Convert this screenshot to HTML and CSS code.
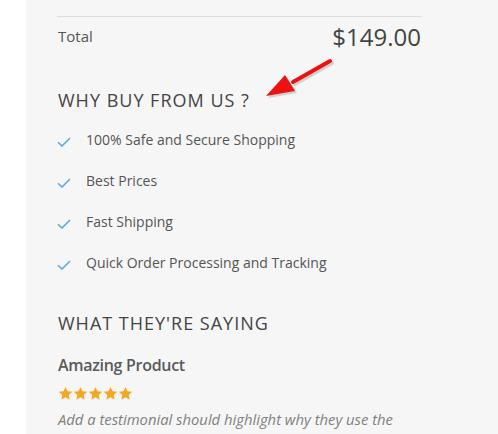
FILE: index.html
```html
<!DOCTYPE html>
<html>
<head>
<meta charset="utf-8">
<link rel="stylesheet" href="styles.css">
</head>
<body>
<div class="panel">
  <div class="summary">
    <div class="total-row">
      <span class="total-label">Total</span>
      <span class="total-price">$149.00</span>
    </div>
  </div>
  <h3 class="heading why">WHY BUY FROM US ?</h3>
  <ul class="checks">
    <li><svg class="check" viewBox="0 0 14 10" width="14" height="10"><path d="M1 5.2 L5 9 L13 1" fill="none" stroke="#5aa6dc" stroke-width="1.5"/></svg><span>100% Safe and Secure Shopping</span></li>
    <li><svg class="check" viewBox="0 0 14 10" width="14" height="10"><path d="M1 5.2 L5 9 L13 1" fill="none" stroke="#5aa6dc" stroke-width="1.5"/></svg><span>Best Prices</span></li>
    <li><svg class="check" viewBox="0 0 14 10" width="14" height="10"><path d="M1 5.2 L5 9 L13 1" fill="none" stroke="#5aa6dc" stroke-width="1.5"/></svg><span>Fast Shipping</span></li>
    <li><svg class="check" viewBox="0 0 14 10" width="14" height="10"><path d="M1 5.2 L5 9 L13 1" fill="none" stroke="#5aa6dc" stroke-width="1.5"/></svg><span>Quick Order Processing and Tracking</span></li>
  </ul>
  <h3 class="heading saying">WHAT THEY'RE SAYING</h3>
  <div class="testimonial">
    <div class="t-title">Amazing Product</div>
    <div class="stars">
      <svg viewBox="0 0 24 24" width="15" height="15"><path d="M12 1.5l3.2 7 7.6.8-5.7 5.1 1.6 7.5L12 18l-6.7 3.9 1.6-7.5L1.2 9.3l7.6-.8z" fill="#f5a623"/></svg><svg viewBox="0 0 24 24" width="15" height="15"><path d="M12 1.5l3.2 7 7.6.8-5.7 5.1 1.6 7.5L12 18l-6.7 3.9 1.6-7.5L1.2 9.3l7.6-.8z" fill="#f5a623"/></svg><svg viewBox="0 0 24 24" width="15" height="15"><path d="M12 1.5l3.2 7 7.6.8-5.7 5.1 1.6 7.5L12 18l-6.7 3.9 1.6-7.5L1.2 9.3l7.6-.8z" fill="#f5a623"/></svg><svg viewBox="0 0 24 24" width="15" height="15"><path d="M12 1.5l3.2 7 7.6.8-5.7 5.1 1.6 7.5L12 18l-6.7 3.9 1.6-7.5L1.2 9.3l7.6-.8z" fill="#f5a623"/></svg><svg viewBox="0 0 24 24" width="15" height="15"><path d="M12 1.5l3.2 7 7.6.8-5.7 5.1 1.6 7.5L12 18l-6.7 3.9 1.6-7.5L1.2 9.3l7.6-.8z" fill="#f5a623"/></svg>
    </div>
    <p class="t-text">Add a testimonial should highlight why they use the</p>
  </div>
</div>
<svg class="arrow" viewBox="0 0 80 50" width="80" height="50">
  <g transform="translate(2,2)" fill="#b8b8b8" opacity="0.6">
    <path d="M69 5 L32 26" stroke="#b8b8b8" stroke-width="4" stroke-linecap="round"/>
    <path d="M5 40 L24 19 L34 35 Z"/>
  </g>
  <path d="M69 5 L32 26" stroke="#ee1111" stroke-width="4" stroke-linecap="round"/>
  <path d="M5 40 L24 19 L34 35 Z" fill="#ee1111"/>
</svg>
</body>
</html>
```
FILE: styles.css
```css
html, body {
  margin: 0;
  padding: 0;
  background: #ffffff;
  overflow: hidden;
}
body {
  font-family: "Open Sans", "Liberation Sans", sans-serif;
  color: #555555;
  height: 434px;
}
.panel {
  margin-left: 26px;
  background: #f6f6f6;
  padding: 16px 77px 0 31px;
  min-height: 434px;
  box-sizing: border-box;
}
.summary {
  border-top: 1px solid #dddddd;
}
.total-row {
  display: flex;
  justify-content: space-between;
  align-items: center;
  height: 38px;
}
.total-label {
  font-size: 15px;
  color: #555;
  margin-left: 1px;
}
.total-price {
  font-size: 24px;
  color: #444;
}
.heading {
  margin: 0;
  font-weight: 400;
  font-size: 18px;
  letter-spacing: 1px;
  color: #444;
  padding-left: 1px;
}
.why {
  margin-top: 33px;
}
.checks {
  list-style: none;
  margin: 7px 0 0;
  padding: 0;
}
.checks li {
  display: flex;
  align-items: center;
  height: 41px;
  font-size: 14px;
  color: #555;
}
.check {
  margin: 5px 15px 0 0;
  flex: none;
}
.saying {
  margin-top: 28px;
}
.testimonial {
  margin-top: 19px;
  padding-left: 1px;
}
.t-title {
  font-size: 16px;
  font-weight: 600;
  letter-spacing: -0.3px;
  color: #5a5a5a;
}
.stars {
  display: flex;
  margin-top: 10px;
}
.t-text {
  margin: 8px 0 0;
  font-style: italic;
  font-size: 14.8px;
  color: #808080;
}
.arrow {
  position: absolute;
  left: 261px;
  top: 56px;
}
```
